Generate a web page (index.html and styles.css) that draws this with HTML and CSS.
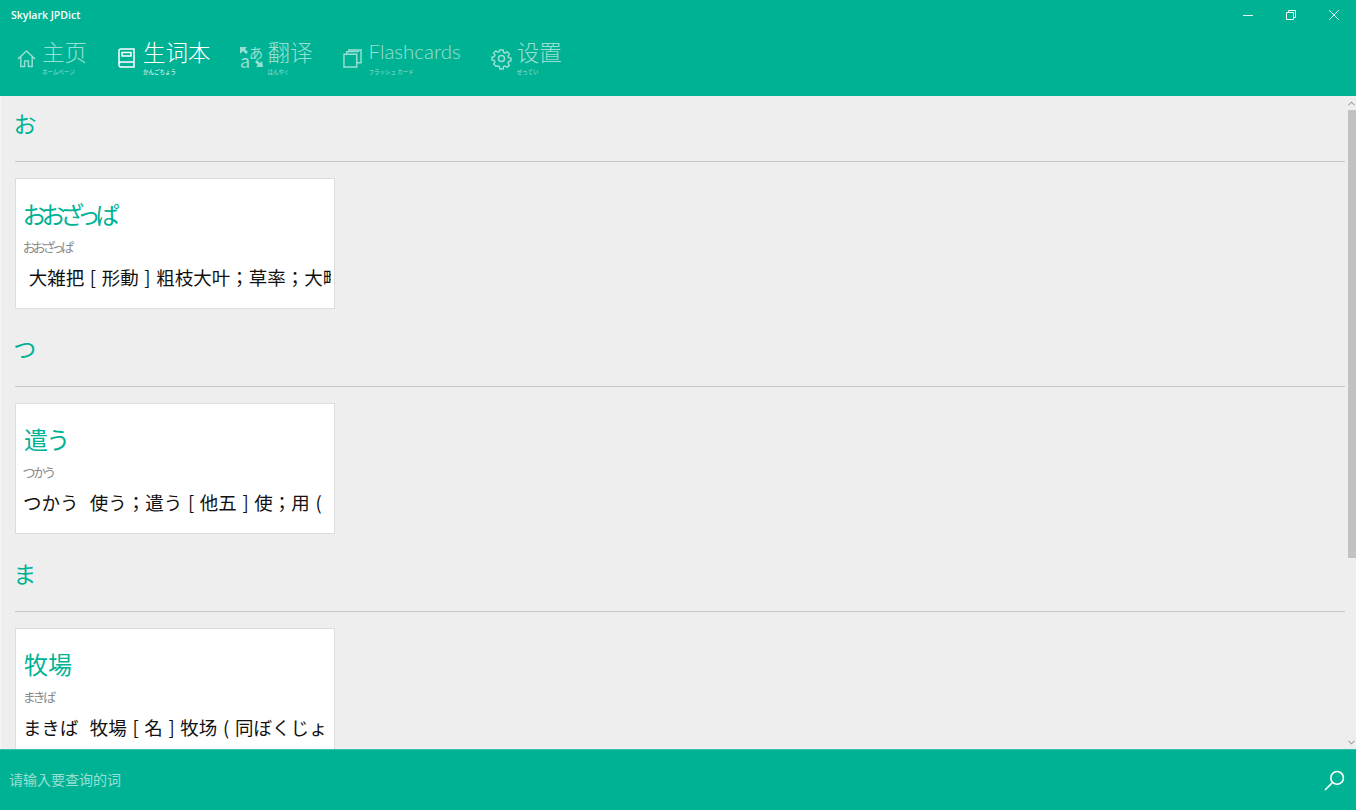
FILE: index.html
```html
<!DOCTYPE html>
<html lang="ja">
<head>
    <meta charset="UTF-8">
    <title>Skylark JPDict</title>
    <link rel="stylesheet" href="styles.css">
</head>
<body>
    <div class="app">
        <header class="header">
            <div class="titlebar">
                <span class="app-title">Skylark JPDict</span>
                <div class="window-controls">
                    <svg class="win-icon" viewBox="0 0 10 10"><path d="M0 5.5h10"/></svg>
                    <svg class="win-icon" viewBox="0 0 10 10"><path d="M.5 2.5h7v7h-7zM2.5 2.5V.5h7v7h-2"/></svg>
                    <svg class="win-icon" viewBox="0 0 10 10"><path d="M.2.2l9.6 9.6M9.8.2L.2 9.8"/></svg>
                </div>
            </div>
            <nav class="nav">
                <a class="nav-item">
                    <svg class="nav-icon" viewBox="0 0 20 20"><path d="M1 10.500L10 2l9 8.500M4 8v10.500h4v-6h4v6h4V8"/></svg>
                    <div class="nav-text"><div class="nav-label">主页</div><div class="nav-sub">ホームページ</div></div>
                </a>
                <a class="nav-item active">
                    <svg class="nav-icon book" viewBox="0 0 17 20"><path d="M1 16.500V3C1 1.800 1.800 1 3 1h13v18H3c-1.200 0-2-.9-2-2.500s.8-2.500 2-2.500h13M4 4.500h9v3.500H4z"/></svg>
                    <div class="nav-text"><div class="nav-label">生词本</div><div class="nav-sub">かんごちょう</div></div>
                </a>
                <a class="nav-item">
                    <svg class="nav-icon translate" viewBox="0 0 23 24">
                        <path class="solid" d="M0 2h7L5 4l3 3-2 2-3-3-2 2-1 .5zM23 22h-7l2-2-3-3 2-2 3 3 2-2z"/>
                        <text class="tr-kana" x="9" y="13">あ</text>
                        <text class="tr-latin" x="0" y="23">a</text>
                    </svg>
                    <div class="nav-text"><div class="nav-label">翻译</div><div class="nav-sub">はんやく</div></div>
                </a>
                <a class="nav-item">
                    <svg class="nav-icon cards" viewBox="0 0 20 20"><path d="M1 5.500h13.500V19H1zM4 5.500V2.800h12.500V3M6 2.800V1h13v13.500h-4.500"/></svg>
                    <div class="nav-text"><div class="nav-label latin">Flashcards</div><div class="nav-sub">フラッシュ カード</div></div>
                </a>
                <a class="nav-item">
                    <svg class="nav-icon gear" viewBox="0 0 20 20"><circle cx="10" cy="10" r="3.200"/><path d="M8.300 1h3.400l.5 2.600 1.500.7 2.300-1.400 2.300 2.400-1.400 2.200.6 1.600 2.500.5v3l-2.500.6-.6 1.500 1.400 2.200-2.300 2.400-2.300-1.400-1.500.6-.5 2.500H8.300l-.5-2.500-1.500-.6L4 18.200 1.700 15.800l1.400-2.200-.6-1.500L0 11.500v-3l2.500-.5.600-1.600L1.700 4.300 4 1.900l2.300 1.400 1.500-.7z"/></svg>
                    <div class="nav-text"><div class="nav-label">设置</div><div class="nav-sub">せってい</div></div>
                </a>
            </nav>
        </header>

        <main class="main">
            <div class="word-list">
                <section class="group">
                    <h2 class="group-title">お</h2>
                    <hr class="group-rule">
                    <div class="card">
                        <div class="card-word kana">おおざっぱ</div>
                        <div class="card-reading kana">おおざっぱ</div>
                        <div class="card-desc">&nbsp;大雑把 [ 形動 ] 粗枝大叶；草率；大略</div>
                    </div>
                </section>
                <section class="group">
                    <h2 class="group-title">つ</h2>
                    <hr class="group-rule">
                    <div class="card">
                        <div class="card-word">遣う</div>
                        <div class="card-reading">つかう</div>
                        <div class="card-desc">つかう&nbsp; 使う；遣う [ 他五 ] 使；用 (</div>
                    </div>
                </section>
                <section class="group">
                    <h2 class="group-title">ま</h2>
                    <hr class="group-rule">
                    <div class="card">
                        <div class="card-word">牧場</div>
                        <div class="card-reading">まきば</div>
                        <div class="card-desc">まきば&nbsp; 牧場 [ 名 ] 牧场 ( 同ぼくじょ</div>
                    </div>
                </section>
            </div>
            <div class="scrollbar">
                <svg class="scroll-arrow" viewBox="0 0 8 5"><path d="M.5 4.500L4 1l3.500 3.500"/></svg>
                <div class="scroll-track"><div class="scroll-thumb"></div></div>
                <svg class="scroll-arrow" viewBox="0 0 8 5"><path d="M.5.500L4 4 7.500.500"/></svg>
            </div>
        </main>

        <footer class="search-bar">
            <span class="search-hint">请输入要查询的词</span>
            <svg class="search-icon" viewBox="0 0 20 20"><circle cx="12.500" cy="7.500" r="6"/><path d="M8.200 11.800L1 19"/></svg>
        </footer>
    </div>
</body>
</html>
```

FILE: styles.css
```css
* {
    box-sizing: border-box;
}
html, body {
    margin: 0;
    height: 100%;
    overflow: hidden;
}
body {
    font-family: "Noto Sans CJK JP", "Noto Sans", sans-serif;
}
.app {
    display: flex;
    flex-direction: column;
    height: 810px;
}

/* top bar */
.header {
    height: 96px;
    background-color: #00b294;
    color: #fff;
}
.titlebar {
    display: flex;
    justify-content: space-between;
    align-items: center;
    height: 30px;
    padding-left: 11px;
}
.app-title {
    font-family: "Open Sans", sans-serif;
    font-size: 10.500px;
    font-weight: 600;
}
.window-controls {
    display: flex;
}
.win-icon {
    width: 10px;
    height: 10px;
    margin: 0 17px 0 16px;
    fill: none;
    stroke: #e6f7f4;
    stroke-width: 1;
}
.nav {
    display: flex;
    gap: 30px;
    padding-left: 17px;
}
.nav-item {
    display: flex;
    color: rgba(255, 255, 255, 0.6);
    stroke: rgba(255, 255, 255, 0.6);
}
.nav-item.active {
    color: #fff;
    stroke: #fff;
}
.nav-icon {
    flex: none;
    width: 19px;
    height: 19px;
    margin: 19px 6px 0 0;
    fill: none;
    stroke-width: 1.500;
    overflow: visible;
}
.nav-icon.book {
    width: 17px;
    height: 20px;
    margin: 18px 8px 0 1px;
}
.nav-icon.translate {
    width: 23px;
    height: 24px;
    margin: 15px 5px 0 -1px;
}
.nav-icon.cards {
    margin-right: 7px;
}
.nav-icon.gear {
    margin-left: 1px;
}
.translate .solid {
    fill: rgba(255, 255, 255, 0.6);
    stroke: none;
}
.tr-kana {
    font-size: 14px;
    fill: rgba(255, 255, 255, 0.6);
    stroke: none;
}
.tr-latin {
    font-size: 18px;
    fill: rgba(255, 255, 255, 0.6);
    stroke: none;
}
.nav-label {
    font-size: 22.500px;
    font-weight: 300;
    line-height: 28px;
    margin-top: 7px;
    white-space: nowrap;
}
.nav-label.latin {
    font-family: Lato, sans-serif;
    font-size: 20.500px;
}
.nav-sub {
    font-size: 5.500px;
    line-height: 8px;
    margin-top: 3px;
    white-space: nowrap;
}

/* word list */
.main {
    flex: 1;
    display: flex;
    min-height: 0;
    background-color: #eee;
    border-left: 1px solid #f5f5f5;
}
.word-list {
    flex: 1;
    min-width: 0;
    overflow: hidden;
    padding: 0 2px 0 14px;
}
.group {
    height: 225px;
}
.group-title {
    margin: 0 0 0 -1px;
    height: 65px;
    padding-top: 8px;
    font-size: 23px;
    font-weight: 400;
    line-height: 38px;
    color: #00b294;
    font-feature-settings: "palt";
}
.group-rule {
    margin: 0 0 16px;
    border: none;
    border-top: 1px solid #c6c6c6;
}
.card {
    width: 320px;
    height: 131px;
    padding: 19px 3px 0 8px;
    background-color: #fff;
    border: 1px solid #ddd;
}
.card-word {
    font-size: 24px;
    line-height: 32px;
    color: #00b294;
    white-space: nowrap;
    font-feature-settings: "palt";
}
.card-word.kana {
    margin-left: -1px;
    letter-spacing: -4px;
}
.card-reading {
    font-size: 13px;
    line-height: 20px;
    margin: 7px 0 0 -1px;
    color: #8a8a8a;
    white-space: nowrap;
    font-feature-settings: "palt";
    letter-spacing: -1.800px;
}
.card-reading.kana {
    letter-spacing: -2.400px;
}
.card-desc {
    font-size: 18.500px;
    line-height: 28px;
    margin: 6px 0 0 -1px;
    color: #111;
    white-space: nowrap;
    overflow: hidden;
    word-spacing: 1.500px;
}

/* scrollbar */
.scrollbar {
    display: flex;
    flex-direction: column;
    width: 9px;
}
.scroll-arrow {
    flex: none;
    width: 7px;
    height: 5px;
    margin: 5px 0 4px 1px;
    fill: none;
    stroke: #9a9a9a;
    stroke-width: 1.200;
}
.scroll-track {
    flex: 1;
}
.scroll-thumb {
    width: 8px;
    height: 448px;
    margin-left: 1px;
    background-color: #c2c2c2;
}

/* search */
.search-bar {
    display: flex;
    justify-content: space-between;
    align-items: center;
    height: 61px;
    padding: 0 11px 0 9px;
    background-color: #00b294;
    border-top: 1px solid #33c1a9;
}
.search-hint {
    font-size: 14px;
    line-height: 18px;
    margin-bottom: 2px;
    color: rgba(255, 255, 255, 0.6);
}
.search-icon {
    width: 21px;
    height: 21px;
    fill: none;
    stroke: #fff;
    stroke-width: 1.500;
}
```
